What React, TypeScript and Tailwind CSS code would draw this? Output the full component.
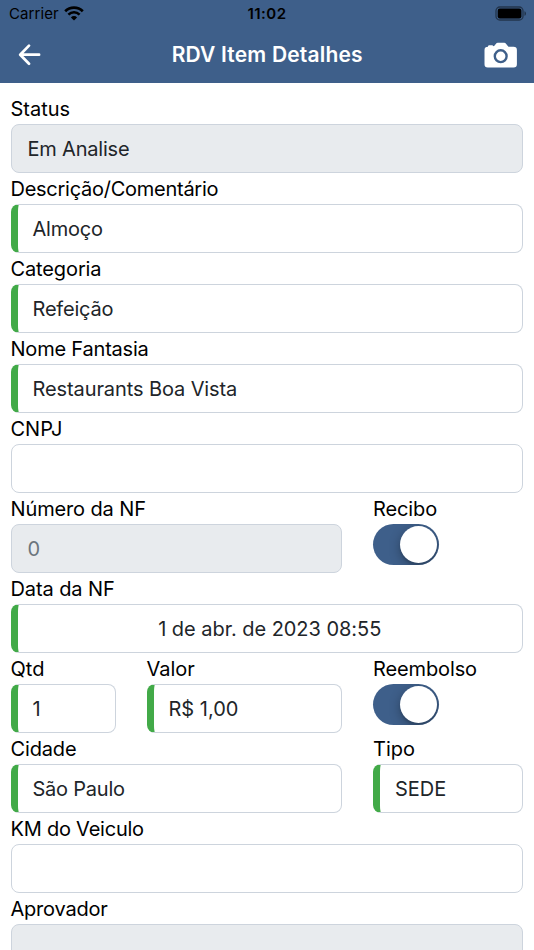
import type { ReactNode } from "react";

type InputProps = {
  value?: string;
  required?: boolean;
  disabled?: boolean;
  muted?: boolean;
  centered?: boolean;
  tracking?: string;
};

function Input({ value, required, disabled, muted, centered, tracking = "" }: InputProps) {
  return (
    <div
      className={`flex h-[49px] items-center overflow-hidden rounded-[8px] border-[1.33px] border-[#cdd4dd] pt-[1px] text-[20px] ${
        disabled ? "bg-[#e8ebee]" : "bg-white"
      } ${muted ? "text-[#6c757d]" : "text-[#212529]"} ${centered ? "justify-center" : ""} ${
        required ? "border-l-[7px] border-l-[#42aa48] pl-[15px]" : "pl-4"
      } ${centered ? "pr-[15px]" : ""}`}
    >
      <span className={`whitespace-nowrap ${tracking}`}>{value}</span>
    </div>
  );
}

function Field({ label, tracking = "", className = "", children }: { label: string; tracking?: string; className?: string; children: ReactNode }) {
  return (
    <div className={`h-20 ${className}`}>
      <div className="flex h-[31px] items-center text-[20px] text-black">
        <span className={`whitespace-nowrap ${tracking}`}>{label}</span>
      </div>
      {children}
    </div>
  );
}

function Toggle() {
  return (
    <div className="flex h-[41px] w-[66px] items-center justify-end overflow-hidden rounded-full bg-[#3e5f8a] pr-[2px]">
      <div className="size-[37px] rounded-full bg-white shadow-[0_3px_12px_rgba(0,0,0,0.3),0_3px_2px_rgba(0,0,0,0.1)]" />
    </div>
  );
}

function StatusBar() {
  return (
    <div className="grid h-[27px] grid-cols-3 items-center text-black">
      <div className="flex items-center gap-[5px] pl-[9px]">
        <span className="pt-[2px] text-[15px] tracking-[0.1px]">Carrier</span>
        <svg width="20" height="15" viewBox="0 0 20 15" fill="none" stroke="currentColor">
          <path d="M1.2 5.2a12.5 12.5 0 0 1 17.6 0" strokeWidth="2.7" />
          <path d="M4.4 8.6a7.9 7.9 0 0 1 11.2 0" strokeWidth="2.5" />
          <path d="M10 14.4 6.9 11.4a4.4 4.4 0 0 1 6.2 0Z" fill="currentColor" stroke="none" />
        </svg>
      </div>
      <div className="pt-[2px] text-center text-[15px] font-semibold tracking-[0.45px]">11:02</div>
      <div className="flex justify-end pr-[7px]">
        <svg width="32" height="15" viewBox="0 0 32 15">
          <rect x="1" y="1" width="27" height="13" rx="3.8" fill="none" stroke="#000" strokeOpacity=".45" strokeWidth="1.3" />
          <rect x="2.7" y="2.6" width="23.7" height="9.8" rx="2.2" />
          <path d="M29.5 5.2v4.6c1.9-.7 1.9-3.9 0-4.6Z" fillOpacity=".5" />
        </svg>
      </div>
    </div>
  );
}

function NavBar() {
  return (
    <div className="flex h-[55px] items-center justify-between pr-[15.5px] pl-[18px] text-white">
      <svg width="24" height="22" viewBox="0 0 24 22" fill="none" stroke="currentColor" strokeWidth="2.7" strokeLinecap="round" strokeLinejoin="round">
        <path d="M11 1.6 2.2 10.7 11 19.8M2.6 10.7h18.5" />
      </svg>
      <h1 className="pl-[8px] text-[21px] font-semibold tracking-[0.18px]">RDV Item Detalhes</h1>
      <svg width="34" height="26" viewBox="0 0 34 26">
        <path
          fill="currentColor"
          d="M4 4.7V4.3Q4.2 3.3 5.2 3.3H8.2Q9 3.4 9.2 4.3L10.4 3.8 12 1.7Q12.6.7 13.8.7H20.2Q21.4.7 22 1.7L24 4.2Q24.4 4.7 25.2 4.7H29.5Q32.9 4.7 32.9 8V22.3Q32.9 25.6 29.6 25.6H3.8Q.5 25.6.5 22.3V8Q.5 4.7 4 4.7Z"
        />
        <circle cx="16.7" cy="14.2" r="5.9" fill="none" stroke="#3e5f8a" strokeWidth="2.4" />
      </svg>
    </div>
  );
}

export default function App() {
  return (
    <div className="h-[950px] w-full overflow-hidden bg-white font-['Inter','Liberation_Sans',sans-serif]">
      <header className="h-[83px] bg-[#3e5f8a]">
        <StatusBar />
        <NavBar />
      </header>
      <main className="pt-[10px] pr-[11px] pl-[10.5px]">
        <Field label="Status"><Input disabled value="Em Analise" tracking="tracking-[-0.2px]" /></Field>
        <Field label="Descrição/Comentário" tracking="tracking-[-0.26px]"><Input required value="Almoço" tracking="tracking-[-0.2px]" /></Field>
        <Field label="Categoria" tracking="tracking-[-0.12px]"><Input required value="Refeição" tracking="tracking-[-0.2px]" /></Field>
        <Field label="Nome Fantasia" tracking="tracking-[-0.2px]"><Input required value="Restaurants Boa Vista" tracking="tracking-[-0.1px]" /></Field>
        <Field label="CNPJ"><Input /></Field>
        <div className="flex gap-[31px]">
          <Field label="Número da NF" tracking="tracking-[-0.13px]" className="w-[331.5px]"><Input disabled muted value="0" /></Field>
          <Field label="Recibo" tracking="tracking-[-0.1px]" className="flex-1"><Toggle /></Field>
        </div>
        <Field label="Data da NF" tracking="tracking-[-0.1px]"><Input required centered value="1 de abr. de 2023 08:55" tracking="tracking-[-0.04px]" /></Field>
        <div className="flex gap-[31px]">
          <Field label="Qtd" className="w-[105px]"><Input required value="1" /></Field>
          <Field label="Valor" className="w-[195.5px]"><Input required value="R$ 1,00" /></Field>
          <Field label="Reembolso" tracking="tracking-[-0.12px]" className="flex-1"><Toggle /></Field>
        </div>
        <div className="flex gap-[31px]">
          <Field label="Cidade" tracking="tracking-[-0.15px]" className="w-[331.5px]"><Input required value="São Paulo" tracking="tracking-[-0.22px]" /></Field>
          <Field label="Tipo" className="flex-1"><Input required value="SEDE" /></Field>
        </div>
        <Field label="KM do Veiculo" tracking="tracking-[-0.23px]"><Input /></Field>
        <Field label="Aprovador" tracking="tracking-[-0.22px]"><Input disabled /></Field>
      </main>
    </div>
  );
}
